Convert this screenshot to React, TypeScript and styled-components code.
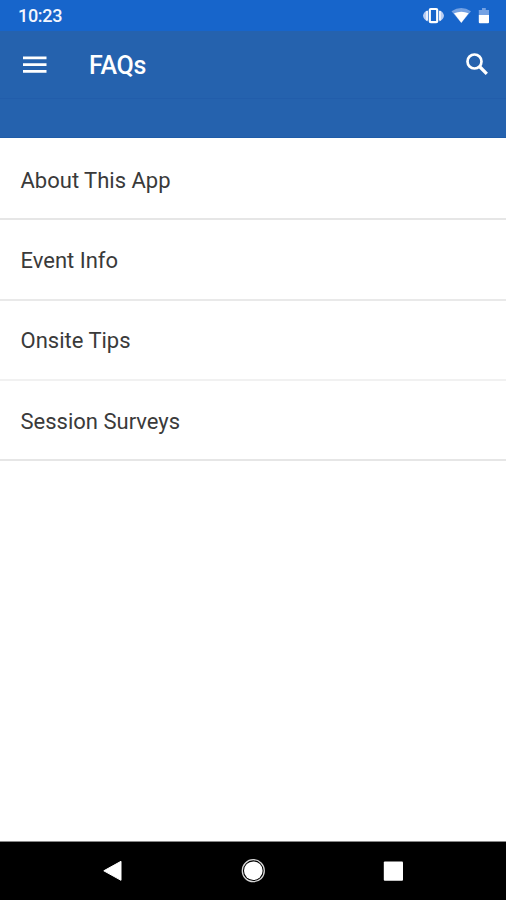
import React from "react";
import styled, { createGlobalStyle } from "styled-components";

const GlobalStyle = createGlobalStyle`
  * { box-sizing: border-box; }
  html, body { margin: 0; padding: 0; }
  body { font-family: Roboto, "Liberation Sans", sans-serif; background: #fff; }
`;

const Screen = styled.div`
  display: flex;
  flex-direction: column;
  width: 100%;
  height: 100vh;
  min-height: 900px;
  background: #fff;
`;

const StatusBar = styled.div`
  flex: none;
  display: flex;
  align-items: center;
  justify-content: space-between;
  height: 31px;
  padding: 1px 15px 0 18px;
  background: #1765cb;
  color: #f3f6fe;
`;

const Clock = styled.span`
  font-size: 18px;
  line-height: 20px;
  font-weight: 500;
  letter-spacing: -0.3px;
`;

const StatusIcons = styled.svg`
  display: block;
  width: 70px;
  height: 30px;
`;

const AppBar = styled.header`
  flex: none;
  display: flex;
  align-items: center;
  height: 67px;
  padding: 0 15px 0 23px;
  background: #2562ae;
  color: #fff;
`;

const IconButton = styled.button`
  display: flex;
  padding: 0;
  border: 0;
  background: none;
  color: inherit;
`;

const Title = styled.h1`
  flex: 1;
  margin: 3px 0 0 42px;
  font-size: 25px;
  line-height: 30px;
  font-weight: 500;
  letter-spacing: -0.2px;
`;

const SubBar = styled.div`
  flex: none;
  height: 40px;
  background: #2562ae;
  border-top: 1px solid #225dab;
  border-bottom: 1px solid #1f5ca8;
`;

const List = styled.ul`
  flex: 1;
  margin: 0;
  padding: 0;
  list-style: none;
`;

const Row = styled.li<{ $height: number; $line: string }>`
  display: flex;
  align-items: center;
  height: ${(p) => p.$height}px;
  padding: 3px 20.5px 0;
  border-bottom: 2px solid ${(p) => p.$line};
  color: #3a3a3a;
  font-size: 22px;
  line-height: 28px;
  font-weight: 400;

  &:first-child {
    padding-top: 5px;
  }

  &:nth-child(3) {
    padding-top: 2px;
  }
`;

const NavBar = styled.nav`
  flex: none;
  display: flex;
  align-items: center;
  justify-content: space-around;
  height: 59px;
  padding: 0 43px;
  border-top: 1px solid #888;
  background: #000;
`;

const topics = [
  { label: "About This App", height: 82, line: "#e6e6e6" },
  { label: "Event Info", height: 81, line: "#e9e9e9" },
  { label: "Onsite Tips", height: 80, line: "#f1f1f1" },
  { label: "Session Surveys", height: 80, line: "#e6e6e6" },
];

export default function App() {
  return (
    <Screen>
      <GlobalStyle />
      <StatusBar>
        <Clock>10:23</Clock>
        <StatusIcons viewBox="0 0 70 30" aria-hidden="true">
          <path d="M6.500 9.200v11.200Q2.500 18.500 2 14.800Q2.500 11 6.500 9.200ZM18.500 9.200v11.200Q22.500 18.500 23 14.800Q22.500 11 18.500 9.200Z" fill="#b9cdf2" />
          <path d="M6 10v9.500M19 10v9.500" stroke="#e8eefc" strokeWidth="2" />
          <rect x="8.800" y="8" width="7.400" height="13.200" rx="1" fill="#1765cb" stroke="#fff" strokeWidth="2.200" />
          <path d="M30.500 10.300Q40.300 3.500 50 10.300L40.300 22Z" fill="#75a2e3" />
          <path d="M33 12.300Q40.300 9 47.600 12.300L40.300 21.800Z" fill="#fff" />
          <path d="M61 7h3.800v2H68v5H57.800V9H61Z" fill="#75a2e3" />
          <path d="M57.800 14H68v7.300q0 1-1 1h-8.200q-1 0-1-1Z" fill="#fff" />
        </StatusIcons>
      </StatusBar>
      <AppBar>
        <IconButton aria-label="Menu">
          <svg width="24" height="18" viewBox="0 0 24 18">
            <path d="M0 1.800h23.500M0 8.600h23.500M0 15.400h23.500" stroke="#fff" strokeWidth="2.800" />
          </svg>
        </IconButton>
        <Title>FAQs</Title>
        <IconButton aria-label="Search">
          <svg width="28" height="28" viewBox="0 0 28 28" fill="none" stroke="#fff">
            <circle cx="11.500" cy="10.500" r="7" strokeWidth="2.700" />
            <path d="M16.500 15.500l7.300 7.300" strokeWidth="3.300" />
          </svg>
        </IconButton>
      </AppBar>
      <SubBar />
      <List>
        {topics.map((t) => (
          <Row key={t.label} $height={t.height} $line={t.line}>
            {t.label}
          </Row>
        ))}
      </List>
      <NavBar>
        <IconButton aria-label="Back">
          <svg width="24" height="24" viewBox="0 0 24 24">
            <path d="M2.800 11.800L20 2.300V21.300Z" fill="#fff" stroke="#fff" strokeLinejoin="round" />
          </svg>
        </IconButton>
        <IconButton aria-label="Home">
          <svg width="24" height="24" viewBox="0 0 24 24">
            <circle cx="12.300" cy="11.700" r="11" fill="none" stroke="#d8d8d8" strokeWidth="1.300" />
            <circle cx="12.300" cy="11.700" r="9.300" fill="#fff" />
          </svg>
        </IconButton>
        <IconButton aria-label="Overview">
          <svg width="24" height="24" viewBox="0 0 24 24">
            <rect x="2.800" y="2.500" width="19.200" height="19.200" rx="1" fill="#fff" />
          </svg>
        </IconButton>
      </NavBar>
    </Screen>
  );
}
